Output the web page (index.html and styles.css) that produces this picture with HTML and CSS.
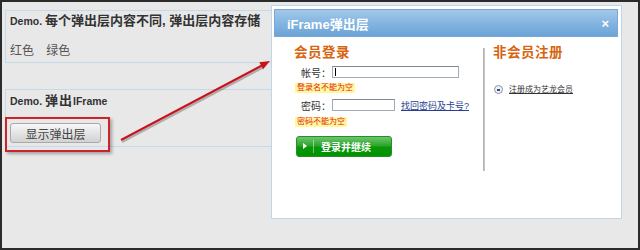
FILE: index.html
```html
<!DOCTYPE html>
<html lang="zh-CN">
<head>
    <meta charset="UTF-8">
    <title>弹出层 Demo</title>
    <link rel="stylesheet" href="styles.css">
</head>
<body>
<div class="screen">
    <div class="panel panel-colors">
        <h3 class="panel-title panel-title-tight"><span class="en">Demo. </span>每个弹出层内容不同, 弹出层内容存储</h3>
        <div class="color-links">
            <a href="#">红色</a>
            <a href="#">绿色</a>
        </div>
    </div>

    <div class="panel panel-iframe">
        <h3 class="panel-title"><span class="en">Demo. </span>弹出<span class="en">IFrame</span></h3>
        <button class="show-btn">显示弹出层</button>
    </div>

    <!-- annotation: red box + arrow -->
    <div class="highlight"></div>
    <svg class="arrow" width="636" height="246" viewBox="0 0 636 246">
        <line x1="120" y1="140" x2="261" y2="65.5" stroke="rgba(0,0,0,0.25)" stroke-width="2"/>
        <line x1="119" y1="138" x2="260" y2="63.5" stroke="#c8131c" stroke-width="2"/>
        <polygon points="268,59 261.1,67.2 257.3,60.2" fill="#c8131c"/>
    </svg>

    <div class="dialog">
        <div class="dialog-head">
            <span class="dialog-title">iFrame弹出层</span>
            <span class="dialog-close">×</span>
        </div>
        <div class="dialog-body">
            <div class="login">
                <h4 class="section-title">会员登录</h4>
                <div class="field">
                    <label class="field-label" for="account">帐号：</label>
                    <input id="account" class="input input-long is-focused" type="text">
                </div>
                <div class="tip">登录名不能为空</div>
                <div class="field">
                    <label class="field-label" for="password">密码：</label>
                    <input id="password" class="input input-short" type="password">
                    <a href="#" class="forgot">找回密码及卡号?</a>
                </div>
                <div class="tip">密码不能为空</div>
                <a href="#" class="login-btn"><span class="login-btn-icon"></span>登录并继续</a>
            </div>
            <div class="divider"></div>
            <div class="register">
                <h4 class="section-title">非会员注册</h4>
                <a href="#" class="register-link"><span class="bullet"></span>注册成为艺龙会员</a>
            </div>
        </div>
    </div>
</div>
</body>
</html>
```

FILE: styles.css
```css
* {
  box-sizing: border-box;
}

body {
  margin: 0;
  font-family: "Liberation Sans", "Noto Sans CJK SC", sans-serif;
  color: #333;
}

.screen {
  position: relative;
  width: 640px;
  height: 250px;
  padding: 8px 0 0 3px;
  border: 2px solid #2b2b2b;
  background-color: #e8e8e8;
  overflow: hidden;
}

/* demo panels */
.panel {
  width: 600px;
  border: 1px solid #c5dae8;
  padding: 2px 4px 3px;
  overflow: hidden;
}

.panel-iframe {
  margin-top: 26px;
  padding-top: 3px;
}

.panel-title {
  margin: 0;
  font-size: 13px;
  line-height: 16px;
  letter-spacing: 1px;
  font-weight: bold;
  color: #333;
  white-space: nowrap;
}

.panel-title-tight {
  letter-spacing: 0;
}

.panel-title .en {
  font-size: 10.5px;
  letter-spacing: 0;
}

.color-links {
  margin-top: 14px;
  font-size: 12px;
  line-height: 16px;
}

.color-links a {
  color: #555;
  text-decoration: none;
  margin-right: 9px;
}

.show-btn {
  display: block;
  margin-top: 14px;
  width: 91px;
  height: 20px;
  padding: 0;
  border: 1px solid #a9a9a9;
  border-radius: 3px;
  background: linear-gradient(#f7f7f7, #e4e4e4 50%, #d2d2d2);
  font-family: "Noto Sans CJK SC", sans-serif;
  font-size: 12px;
  color: #444;
}

.highlight {
  position: absolute;
  left: 3px;
  top: 115px;
  width: 105px;
  height: 35px;
  border: 2px solid #cc2229;
  box-shadow: 2px 2px 3px rgba(0, 0, 0, 0.3);
}

.arrow {
  position: absolute;
  left: 0;
  top: 0;
}

/* popup */
.dialog {
  position: absolute;
  left: 269px;
  top: 3px;
  width: 351px;
  height: 214px;
  padding: 3px 3px 0 2px;
  border: 1px solid #bed6e9;
  background-color: #fff;
}

.dialog-head {
  display: flex;
  justify-content: space-between;
  align-items: center;
  height: 28px;
  padding: 0 8px 0 12px;
  border: 1px solid #77a8d6;
  background: linear-gradient(#a2c8ea, #84b5e1 50%, #6ca3d7);
  color: #fff;
}

.dialog-title {
  font-size: 13px;
  font-weight: bold;
}

.dialog-close {
  font-size: 13px;
  font-weight: bold;
}

.dialog-body {
  display: flex;
  align-items: flex-start;
  padding-top: 7px;
}

.login {
  width: 189px;
  margin-left: 20px;
}

.section-title {
  margin: 0;
  font-size: 13.5px;
  line-height: 18px;
  font-weight: bold;
  letter-spacing: 0.5px;
  color: #d8640f;
}

.field {
  display: flex;
  align-items: center;
  height: 12px;
  margin-top: 4px;
}

.field + .tip + .field {
  margin-top: 6px;
}

.field-label {
  width: 37px;
  margin-right: 1px;
  text-align: right;
  font-size: 10px;
  color: #333;
  white-space: nowrap;
}

.input {
  height: 12px;
  padding: 0;
  border: 1px solid #a3abb4;
  border-top-color: #7f8790;
  background-color: #fff;
}

.input-long {
  width: 127px;
}

.input-short {
  width: 63px;
}

.input.is-focused {
  background: #fff linear-gradient(#000, #000) no-repeat 2px 1px / 1px 8px;
}

.forgot {
  margin-left: 6px;
  font-size: 9px;
  color: #283d93;
  white-space: nowrap;
}

.tip {
  display: table;
  margin: 5px 0 0 1px;
  padding: 0 2px;
  font-size: 8px;
  line-height: 10px;
  color: #e5231b;
  background-color: #fff99c;
}

.tip + .field + .tip {
  margin-top: 6px;
}

.login-btn {
  display: flex;
  align-items: center;
  width: 96px;
  height: 21px;
  margin: 9px 0 0 2px;
  border: 1px solid #2b8c2b;
  border-radius: 3px;
  background: linear-gradient(#6cc66c, #2ea52e 45%, #079807 55%, #009300);
  color: #fff;
  font-size: 10px;
  font-weight: bold;
  text-decoration: none;
}

.login-btn-icon {
  position: relative;
  width: 17px;
  height: 13px;
  margin: 0 7px 0 0;
  border-right: 1px solid rgba(255, 255, 255, 0.45);
}

.login-btn-icon::after {
  content: "";
  position: absolute;
  left: 6px;
  top: 3px;
  border-left: 4px solid #fff;
  border-top: 3.5px solid transparent;
  border-bottom: 3.5px solid transparent;
}

.divider {
  width: 2px;
  height: 123px;
  margin-top: 4px;
  background: linear-gradient(90deg, #a8a8a8, #cfcfcf);
}

.register {
  padding-left: 8px;
}

.register-link {
  display: flex;
  align-items: center;
  margin-top: 22px;
  line-height: 11px;
  font-size: 8px;
  color: #333;
  white-space: nowrap;
}

.bullet {
  position: relative;
  width: 9px;
  height: 9px;
  margin: 0 6px 0 1px;
  border: 1px solid #8a95a8;
  border-radius: 50%;
  background-color: #eef2f8;
}

.bullet::after {
  content: "";
  position: absolute;
  left: 2px;
  top: 3px;
  width: 3px;
  height: 2px;
  background-color: #2f4f8f;
}
```
